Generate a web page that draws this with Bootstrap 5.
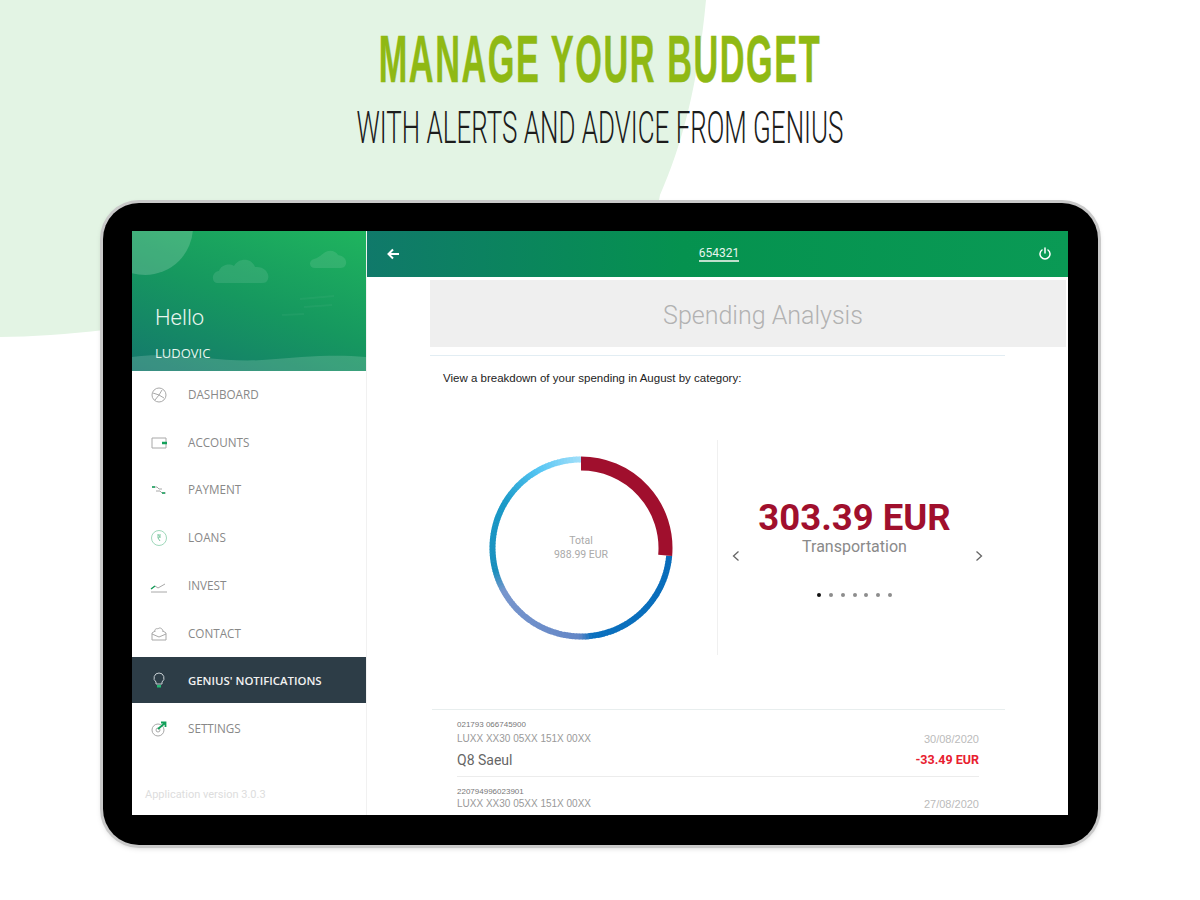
<!DOCTYPE html>
<html lang="en">
<head>
  <meta charset="UTF-8">
  <title>Manage your budget</title>
  <meta name="viewport" content="width=device-width, initial-scale=1">
  <link href="https://cdn.jsdelivr.net/npm/bootstrap@5.3.0/dist/css/bootstrap.min.css" rel="stylesheet">
  <style>
    body {
      width: 1200px;
      height: 900px;
      overflow: hidden;
      background: #fff;
      font-family: 'Roboto', sans-serif;
      position: relative;
    }

    .blob {
      position: absolute;
      left: 0;
      top: 0;
    }

    .promo {
      position: relative;
      height: 203px;
      text-align: center;
      padding-top: 23px;
    }

    .promo-title {
      font-family: 'Liberation Sans Narrow', 'Liberation Sans', sans-serif;
      font-weight: 700;
      font-size: 67px;
      line-height: 72px;
      letter-spacing: 3px;
      color: #8fb914;
      -webkit-text-stroke: .5px #8fb914;
      transform: scaleX(0.512);
      white-space: nowrap;
    }

    .promo-sub {
      font-family: 'Roboto', sans-serif;
      font-weight: 300;
      font-size: 45px;
      line-height: 50px;
      color: #1c1c1c;
      margin-top: 8px;
      transform: scaleX(0.577);
      white-space: nowrap;
    }

    .tablet {
      position: relative;
      width: 995px;
      height: 642px;
      margin-left: 103px;
      padding: 28px 30px 30px 29px;
      background: #000;
      border-radius: 36px;
      box-shadow: 0 0 0 3px #c9c9c9, 0 2px 6px rgba(0, 0, 0, .25);
    }

    .screen {
      height: 584px;
      background: #fff;
      overflow: hidden;
    }

    .side {
      width: 235px;
      flex-shrink: 0;
      border-right: 1px solid #f1f1f1;
    }

    .side-head {
      position: relative;
      height: 140px;
      background: linear-gradient(200deg, #1fb45e 0%, #16985f 50%, #14786c 100%);
      color: #e8f5ee;
      overflow: hidden;
    }

    .side-art {
      position: absolute;
      left: 0;
      top: 0;
    }

    .hello {
      position: relative;
      padding: 72px 0 0 23px;
      font-size: 22px;
      font-weight: 300;
      line-height: 30px;
    }

    .who {
      position: relative;
      padding: 11px 0 0 23px;
      font-family: 'Open Sans', sans-serif;
      font-size: 13px;
      line-height: 18px;
    }

    .menu-link {
      height: 47.7px;
      padding: 0 0 0 18px;
      font-family: 'Open Sans', sans-serif;
      font-size: 11.7px;
      color: #888;
    }

    .menu-link svg {
      margin-right: 20px;
      flex-shrink: 0;
    }

    .menu-link.on {
      height: 46px;
      margin-bottom: 1.7px;
      background: #2d3d47;
      color: #f2f2f2;
      font-size: 11.4px;
      font-weight: 600;
    }

    .version {
      padding: 34px 0 0 13px;
      font-size: 11px;
      color: #ddd;
    }

    .topbar {
      height: 46px;
      padding: 0 16px 0 19px;
      background: linear-gradient(90deg, #10796a 0%, #05924f 45%, #0a9a55 100%);
      color: #fff;
    }

    .acct {
      font-size: 12px;
      color: #e8f5ee;
      border-bottom: 2px solid #bfe0cd;
      line-height: 12px;
      padding-bottom: 1px;
    }

    .pane {
      padding-left: 63px;
    }

    .band {
      height: 67px;
      margin: 3px 2px 0 0;
      padding-left: 30px;
      background: #efefef;
      color: #b2b2b2;
      font-size: 25px;
      font-weight: 300;
      line-height: 72px;
      text-align: center;
    }

    .rule {
      height: 1px;
      margin: 8px 63px 0 0;
      background: #e2edf3;
    }

    .lede {
      margin: 14px 0 0 13px;
      font-family: 'Liberation Sans', sans-serif;
      font-size: 11.5px;
      line-height: 16px;
      color: #222;
    }

    .chart-row {
      height: 215px;
      margin-top: 54px;
    }

    .donut-col {
      width: 287px;
      padding-left: 56px;
      flex-shrink: 0;
    }

    .donut-wrap {
      position: relative;
      width: 190px;
      height: 190px;
      margin-top: 13px;
    }

    .donut-label {
      position: absolute;
      inset: 0;
      font-size: 10.500px;
      line-height: 14px;
      color: #aaa;
    }

    .slide {
      position: relative;
      width: 274px;
      border-left: 1px solid #f0f0f0;
      padding-top: 59px;
      text-align: center;
    }

    .amount {
      font-size: 36.500px;
      font-weight: 700;
      line-height: 38px;
      color: #a00f2d;
      white-space: nowrap;
    }

    .cat {
      font-size: 16px;
      line-height: 20px;
      color: #8a8a8a;
    }

    .chev {
      position: absolute;
      top: 110px;
    }

    .dots {
      margin-top: 36px;
      gap: 7.7px;
    }

    .dots span {
      width: 4px;
      height: 4px;
      border-radius: 50%;
      background: #8d8d8d;
    }

    .dots span.on {
      background: #111;
    }

    .tx-list {
      margin: 54px 63px 0 2px;
      border-top: 1px solid #e8eeee;
      padding: 0 26px 0 25px;
    }

    .tx {
      position: relative;
      border-bottom: 1px solid #ececec;
      height: 67px;
      padding-top: 10px;
    }

    .tx-ref {
      font-family: 'Liberation Sans', sans-serif;
      font-size: 8px;
      line-height: 10px;
      color: #777;
    }

    .tx-iban {
      font-family: 'Liberation Sans', sans-serif;
      font-size: 10px;
      line-height: 14px;
      color: #999;
      margin-top: 2px;
    }

    .tx + .tx .tx-iban {
      margin-top: 0;
    }

    .tx-date {
      font-size: 11px;
      color: #bbb;
    }

    .tx-name {
      font-size: 14px;
      line-height: 18px;
      color: #666;
      margin-top: 5px;
    }

    .tx-sum {
      font-size: 12.500px;
      font-weight: 700;
      line-height: 18px;
      color: #e8202f;
      margin-top: 5px;
    }
  </style>
</head>
<body>
  <svg class="blob" width="720" height="345" viewBox="0 0 720 345">
    <path d="M0 0H706C698 85 682 145 660 195L640 300H104V330C70 334 30 337 0 337Z" fill="#e3f4e4"/>
  </svg>

  <div class="promo">
    <div class="promo-title">MANAGE YOUR BUDGET</div>
    <div class="promo-sub">WITH ALERTS AND ADVICE FROM GENIUS</div>
  </div>

  <div class="tablet">
    <div class="screen d-flex">
      <div class="side d-flex flex-column">
        <div class="side-head">
          <svg class="side-art" width="234" height="140" viewBox="0 0 234 140">
            <circle cx="13" cy="-4" r="48" fill="#fff" fill-opacity=".18"/>
            <path d="M86 52c-7 0-7-11 1-12 2-6 10-8 15-5 5-9 18-8 21 1 9-1 15 6 13 12-1 3-3 4-6 4z" fill="#fff" fill-opacity=".1"/>
            <path d="M183 37c-6 0-7-7-1-9 4-1 6-3 10-6 5-4 12-2 14 2 6 1 9 5 8 9-1 3-3 4-6 4z" fill="#fff" fill-opacity=".1"/>
            <path d="M168 68l34-3M172 76l28-2M150 84l22-1" fill="none" stroke="#fff" stroke-opacity=".04" stroke-width="2"/>
            <path d="M0 126c40-6 90 6 130 3s70-6 104-3v14H0z" fill="#fff" fill-opacity=".16"/>
          </svg>
          <div class="hello">Hello</div>
          <div class="who">LUDOVIC</div>
        </div>
        <nav class="nav flex-column" id="menu"></nav>
        <div class="version">Application version 3.0.3</div>
      </div>

      <div class="flex-grow-1">
        <div class="topbar d-flex align-items-center justify-content-between">
          <svg width="14" height="14" viewBox="0 0 14 14" fill="none" stroke="#fff" stroke-width="2"><path d="M13 7H3M7 2.500 2.500 7 7 11.500"/></svg>
          <span class="acct">654321</span>
          <svg width="14" height="14" viewBox="0 0 14 14" fill="none" stroke="#fff" stroke-width="1.500" stroke-linecap="round"><path d="M7 1v5M4 3a5 5 0 1 0 6 0"/></svg>
        </div>

        <div class="pane">
          <div class="band">Spending Analysis</div>
          <div class="rule"></div>
          <div class="lede">View a breakdown of your spending in August by category:</div>

          <div class="chart-row d-flex">
            <div class="donut-col">
              <div class="donut-wrap">
                <svg width="190" height="190" viewBox="0 0 190 190" id="donut" fill="none"></svg>
                <div class="donut-label d-flex flex-column align-items-center justify-content-center">
                  <span>Total</span>
                  <span>988.99 EUR</span>
                </div>
              </div>
            </div>
            <div class="slide">
              <div class="amount">303.39 EUR</div>
              <div class="cat">Transportation</div>
              <svg class="chev" style="left:13px" width="10" height="12" viewBox="0 0 10 12" fill="none" stroke="#666" stroke-width="1.300"><path d="M7.500 1.500 2.500 6l5 4.500"/></svg>
              <svg class="chev" style="left:256px" width="10" height="12" viewBox="0 0 10 12" fill="none" stroke="#666" stroke-width="1.300"><path d="M2.500 1.500 7.500 6l-5 4.500"/></svg>
              <div class="dots d-flex justify-content-center">
                <span class="on"></span><span></span><span></span><span></span><span></span><span></span><span></span>
              </div>
            </div>
          </div>

          <div class="tx-list">
            <div class="tx">
              <div class="tx-ref">021793 066745900</div>
              <div class="d-flex justify-content-between align-items-end">
                <div class="tx-iban">LUXX XX30 05XX 151X 00XX</div>
                <div class="tx-iban tx-date">30/08/2020</div>
              </div>
              <div class="d-flex justify-content-between">
                <div class="tx-name">Q8 Saeul</div>
                <div class="tx-sum">-33.49 EUR</div>
              </div>
            </div>
            <div class="tx">
              <div class="tx-ref">220794996023901</div>
              <div class="d-flex justify-content-between align-items-end">
                <div class="tx-iban">LUXX XX30 05XX 151X 00XX</div>
                <div class="tx-iban tx-date">27/08/2020</div>
              </div>
            </div>
          </div>
        </div>
      </div>
    </div>
  </div>

  <script>
    // thin grey outline plus one green accent for each entry
    const grey = 'fill="none" stroke="#a8a8a8" stroke-width="1"';
    const green = 'fill="none" stroke="#12a05a" stroke-width="1.300"';
    const items = [
      ['DASHBOARD', `<circle cx="9" cy="9" r="7" ${grey}/><path d="M9 9l3-5M3 7l6 2M5 14l4-5 5 3" ${grey}/>`],
      ['ACCOUNTS', `<path d="M2 4h14v10H2z" ${grey}/><path d="M12 9h5" fill="none" stroke="#12a05a" stroke-width="2.500"/>`],
      ['PAYMENT', `<path d="M2 6h5l2 2h3M6 10h4l2 2h4" ${grey}/><path d="M2 6h3M12 12h3" ${green}/>`],
      ['LOANS', `<circle cx="9" cy="9" r="7.500" fill="none" stroke="#9fd8bb" stroke-width="1"/><path d="M7 6h4M7 8h4M8 6c2 0 2 3 0 3l2 3" fill="none" stroke="#7cc7a0" stroke-width="1"/>`],
      ['INVEST', `<path d="M1 15h16M1 12l4-3 3 2 7-4" ${grey}/><path d="M1 12l4-3" ${green}/>`],
      ['CONTACT', `<path d="M2 9l3-2M16 9l-3-2M2 9v7h14V9M2 10l7 3 7-3M5 8c-1-3 2-4 3-3 1-2 5-1 5 3" ${grey}/>`],
      ['GENIUS\' NOTIFICATIONS', `<path d="M9 2a5 5 0 0 0-3 9v2h6v-2a5 5 0 0 0-3-9z" fill="none" stroke="#c8d0d4" stroke-width="1"/><path d="M7 14h4v2.500H7z" fill="#25b873"/>`],
      ['SETTINGS', `<circle cx="8" cy="10" r="6" ${grey}/><circle cx="8" cy="10" r="2" ${grey}/><path d="M8 9l7-6M11 2.500h4.500V7" fill="none" stroke="#12a05a" stroke-width="1.800"/>`]
    ];

    document.getElementById('menu').innerHTML = items.map(([label, icon]) => `
      <a class="nav-link menu-link d-flex align-items-center ${label.startsWith('GENIUS') ? 'on' : ''}">
        <svg width="18" height="18" viewBox="0 0 18 18">${icon}</svg>${label}
      </a>`).join('');

    // colour stops round the ring, degrees clockwise from 12 o'clock
    const stops = [
      [95, [8, 108, 186]], [172, [10, 112, 190]], [180, [100, 135, 198]], [240, [120, 150, 205]],
      [254, [26, 143, 189]], [300, [26, 154, 200]], [330, [85, 197, 243]], [360, [165, 224, 250]]
    ];

    function point(r, deg) {
      const a = (deg - 90) * Math.PI / 180;
      return (95 + r * Math.cos(a)).toFixed(2) + ' ' + (95 + r * Math.sin(a)).toFixed(2);
    }

    function arc(from, to, color, w) {
      const r = 91.5 - w / 2;
      return `<path d="M${point(r, from)}A${r} ${r} 0 0 1 ${point(r, to)}" stroke="${color}" stroke-width="${w}"/>`;
    }

    function colorAt(deg) {
      for (let i = 1; i < stops.length; i++) {
        if (deg <= stops[i][0]) {
          const t = (deg - stops[i - 1][0]) / (stops[i][0] - stops[i - 1][0]);
          const c = stops[i - 1][1].map((v, k) => Math.round(v + (stops[i][1][k] - v) * t));
          return `rgb(${c.join(',')})`;
        }
      }
      return 'rgb(165,224,250)';
    }

    let ring = '';
    for (let d = 95; d < 360; d += 2) {
      ring += arc(d, Math.min(d + 2.4, 360), colorAt(d), 6);
    }
    ring += arc(0, 95, '#a00f2d', 14);
    document.getElementById('donut').innerHTML = ring;
  </script>
  <script src="https://cdn.jsdelivr.net/npm/bootstrap@5.3.0/dist/js/bootstrap.bundle.min.js"></script>
</body>
</html>
